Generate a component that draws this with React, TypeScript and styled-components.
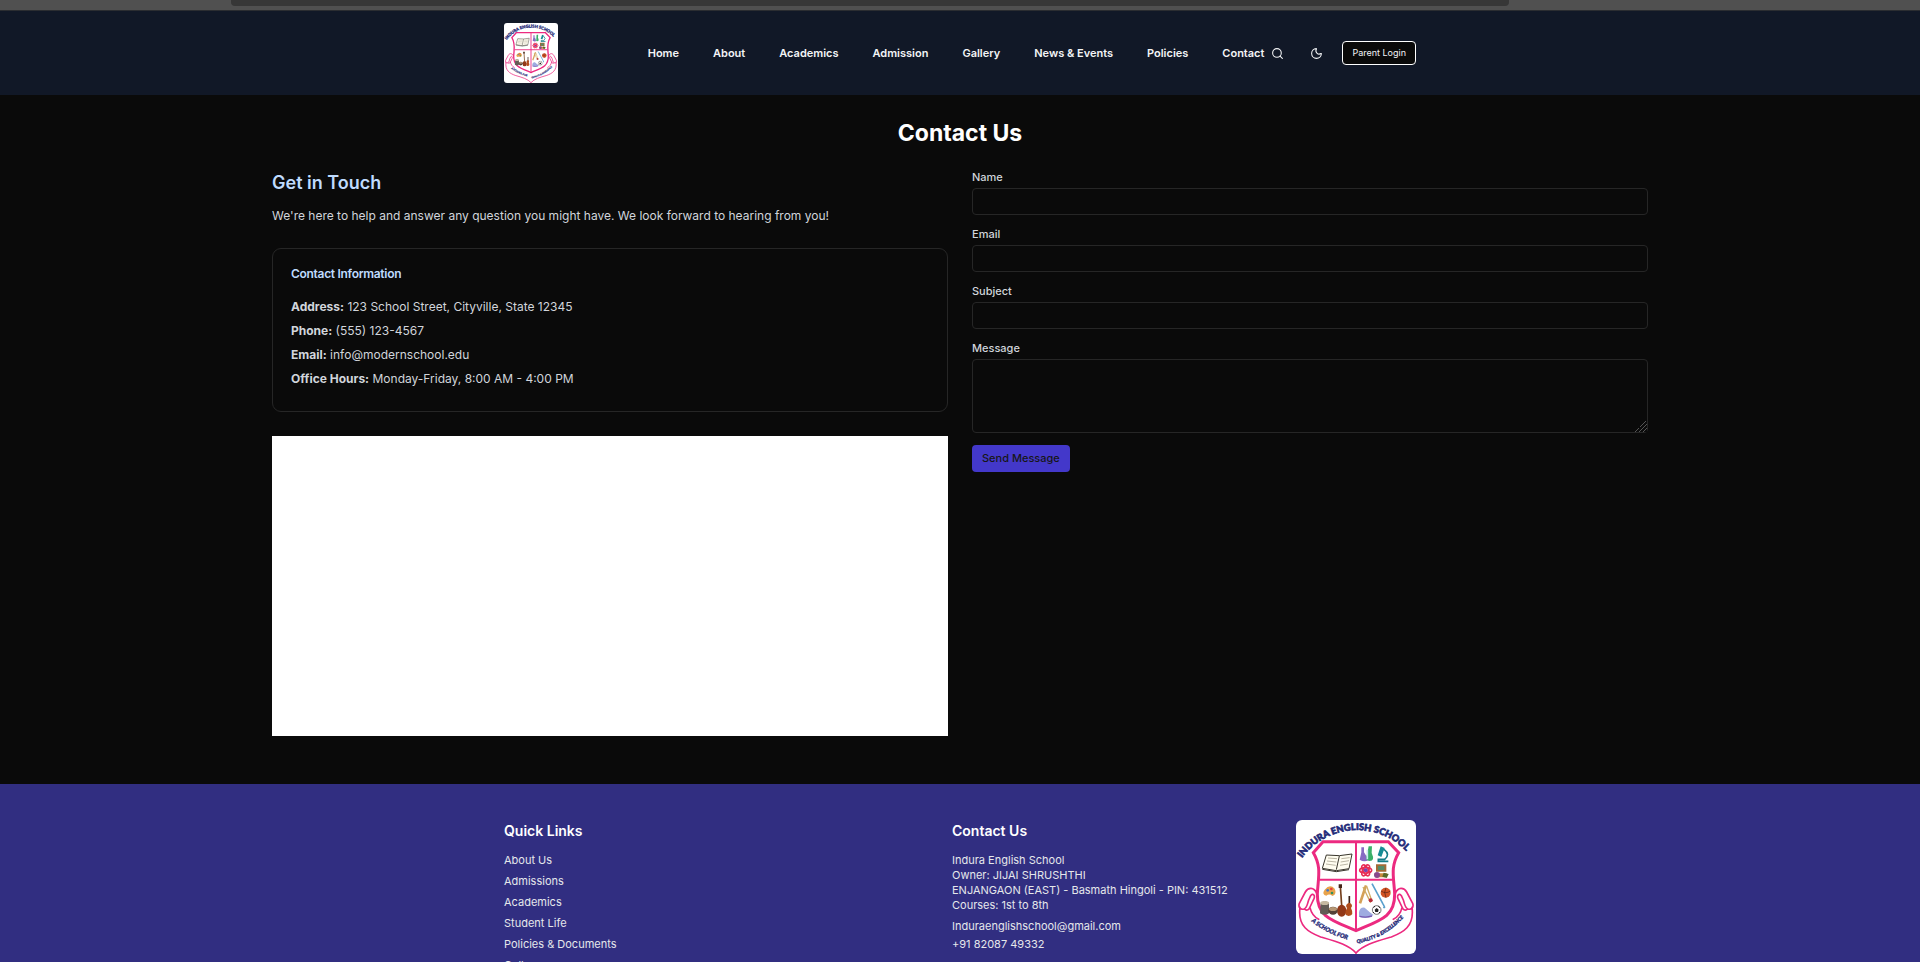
import React from "react";
import styled, { createGlobalStyle } from "styled-components";
import { Moon, Search } from "lucide-react";

const GlobalStyle = createGlobalStyle`
  *, *::before, *::after { box-sizing: border-box; }
  body {
    margin: 0;
    background: #0a0a0a;
    color: #fff;
    font-family: Inter, "Liberation Sans", sans-serif;
    font-size: 12px;
    line-height: 20px;
  }
  h1, h2, h3, p, ul { margin: 0; padding: 0; }
  ul { list-style: none; }
  a { color: inherit; text-decoration: none; }
  button, input, textarea { font-family: inherit; }
`;

const Page = styled.div`
  height: 100vh;
  overflow: hidden;
`;

const TopStrip = styled.div`
  height: 11px;
  padding: 0 411px 0 231px;
  background: #505050;
  border-bottom: 1px solid #2b2d31;
`;

const TopTab = styled.div`
  height: 6px;
  border-radius: 0 0 4px 4px;
  background: #373737;
`;

const Header = styled.header`
  background: #111827;
`;

const Container = styled.div`
  max-width: 936px;
  margin: 0 auto;
  padding: 0 12px;
`;

const HeaderRow = styled(Container)`
  display: flex;
  align-items: center;
  justify-content: space-between;
  padding: 12px;
`;

const CrestSvg = styled.svg<{ $width: number; $height: number; $radius: number }>`
  display: block;
  width: ${(p) => p.$width}px;
  height: ${(p) => p.$height}px;
  border-radius: ${(p) => p.$radius}px;
  background: #fff;
`;

const HeaderRight = styled.div`
  display: flex;
  align-items: center;
`;

const Nav = styled.nav`
  display: flex;
  gap: 34px;
`;

const NavLink = styled.a`
  font-size: 11px;
  line-height: 15px;
  font-weight: 600;
  white-space: nowrap;
  color: #f3f4f6;
`;

const Actions = styled.div`
  display: flex;
  align-items: center;
  gap: 12px;
`;

const IconButton = styled.button`
  display: grid;
  place-items: center;
  width: 27px;
  height: 27px;
  padding: 0;
  border: 0;
  background: transparent;
  color: #f3f4f6;
`;

const LoginButton = styled.button`
  height: 24px;
  padding: 0 9px;
  border: 1px solid #fff;
  border-radius: 4px;
  background: #0a0a0a;
  color: #f3f4f6;
  font-size: 9px;
  line-height: 12px;
  white-space: nowrap;
`;

const Main = styled.main`
  max-width: 1400px;
  margin: 0 auto;
  padding: 24px 12px 48px;
`;

const PageTitle = styled.h1`
  margin-bottom: 22px;
  text-align: center;
  font-size: 23px;
  line-height: 29px;
  font-weight: 700;
`;

const Columns = styled.div`
  display: grid;
  grid-template-columns: 1fr 1fr;
  gap: 24px;
  align-items: start;
`;

const SectionTitle = styled.h2`
  margin-bottom: 10px;
  color: #bfdbfe;
  font-size: 18px;
  line-height: 26px;
  font-weight: 600;
`;

const Intro = styled.p`
  margin-bottom: 22px;
  color: #d1d5db;
`;

const Card = styled.section`
  margin-bottom: 24px;
  padding: 18px;
  border: 1px solid #262626;
  border-radius: 9px;
  color: #d1d5db;
`;

const CardTitle = styled.h3`
  margin-bottom: 16px;
  color: #bfdbfe;
  font-size: 12px;
  line-height: 14px;
  font-weight: 600;
  letter-spacing: -0.025em;
`;

const CardLine = styled.p`
  margin-bottom: 4px;
`;

const MapArea = styled.div`
  height: 300px;
  background: #fff;
`;

const Form = styled.form`
  display: flex;
  flex-direction: column;
  gap: 12px;
`;

const Field = styled.div`
  display: flex;
  flex-direction: column;
  gap: 3px;
`;

const Label = styled.label`
  color: #d1d5db;
  font-size: 11px;
  line-height: 15px;
  font-weight: 500;
`;

const TextInput = styled.input`
  width: 100%;
  height: 27px;
  padding: 6px 9px;
  border: 1px solid #262626;
  border-radius: 4px;
  background: transparent;
  color: #fff;
  font-size: 11px;
`;

const TextArea = styled.textarea`
  width: 100%;
  height: 74px;
  padding: 6px 9px;
  border: 1px solid #262626;
  border-radius: 4px;
  background: transparent;
  color: #fff;
  font-size: 11px;
  resize: vertical;

  &::-webkit-resizer {
    background:
      linear-gradient(135deg, #0a0a0a 60%, transparent 60%),
      repeating-linear-gradient(135deg, #555 0 1px, #0a0a0a 1px 3px);
  }
`;

const SubmitButton = styled.button`
  align-self: flex-start;
  height: 27px;
  padding: 0 10px;
  border: 0;
  border-radius: 4px;
  background: #4338ca;
  color: #171717;
  font-size: 11px;
  line-height: 15px;
  font-weight: 500;
`;

const Footer = styled.footer`
  padding: 36px 0;
  background: #312e81;
`;

const FooterGrid = styled(Container)`
  display: grid;
  grid-template-columns: 1fr 344px 120px;
  align-items: start;
`;

const FooterTitle = styled.h3`
  margin-bottom: 12px;
  font-size: 14px;
  line-height: 21px;
  font-weight: 600;
`;

const FooterLinks = styled.ul`
  display: grid;
  gap: 6px;
`;

const FooterText = styled.div`
  color: #e5e7eb;
  font-size: 11px;
  line-height: 15px;
`;

const ContactLinks = styled.div`
  display: grid;
  gap: 3px;
  margin-top: 6px;
`;

const PINK = "#ec2a80";
const NAVY = "#1f2a78";

function Crest({ id, width, height, radius }: { id: string; width: number; height: number; radius: number }) {
  return (
    <CrestSvg $width={width} $height={height} $radius={radius} viewBox="48 30 360 402" role="img" aria-label="Indura English School">
      <defs>
        <path id={`${id}-top`} d="M66 144 A204 204 0 0 1 406 160" />
        <path id={`${id}-left`} d="M94 334 Q148 378 222 393" />
        <path id={`${id}-right`} d="M231 400 Q320 385 382 310" />
        <path id={`${id}-ribbon`} d="M110 250 C102 230 84 232 76 246 L58 280 C54 293 62 300 72 297 C82 293 82 281 86 270 L92 257 C99 248 106 256 102 266 L90 291 C86 302 78 302 73 297 M60 292 C52 350 88 368 122 381 C170 395 205 404 228 429 M90 293 C94 310 104 322 116 328" />
      </defs>
      <g fill="none" stroke={PINK} strokeWidth="5" strokeLinejoin="round" strokeLinecap="round">
        <use href={`#${id}-ribbon`} />
        <use href={`#${id}-ribbon`} transform="translate(456 0) scale(-1 1)" />
      </g>
      <path d="M129 95 H325 L356 128 C330 172 342 204 344 252 C345 320 303 330 228 362 C153 330 111 320 112 252 C114 204 126 172 100 128 Z" fill="#fff" stroke={PINK} strokeWidth="9" />
      <path d="M228 96 V360 M118 209 H338" fill="none" stroke={PINK} strokeWidth="6" />

      <path d="M139 135 L178 137 L216 132 L207 176 L169 182 L127 175 Z" fill="#fffdf0" stroke="#39362d" strokeWidth="3" />
      <path d="M178 138 L169 179 M127 178 L169 185 L207 179" stroke="#39362d" strokeWidth="3" fill="none" />
      <path d="M144 144 l27 2 M141 153 l28 3 M138 162 l29 4 M184 146 l25 -3 M182 156 l25 -4 M180 166 l24 -4" stroke="#99937f" strokeWidth="2" />

      <path d="M244 112 h8 v15 l14 22 q-12 9-27 0 l5-22 Z" fill="#876ac3" />
      <path d="M266 109 h10 l-1 20 q11 24-6 24 q-16 0-7-24 Z" fill="#3aaf68" />
      <path d="M262 119 v29" stroke="#cbe7f2" strokeWidth="5" />
      <path d="M302 109 l12 5 -10 27 -11 -5 Z" fill="#178c94" />
      <path d="M312 118 q20 15 2 30 h-19 v6 h30" fill="none" stroke="#157d88" strokeWidth="5" />
      <g fill="none" stroke="#e82c55" strokeWidth="5">
        <ellipse cx="257" cy="181" rx="18" ry="8" />
        <ellipse cx="257" cy="181" rx="18" ry="8" transform="rotate(60 257 181)" />
        <ellipse cx="257" cy="181" rx="18" ry="8" transform="rotate(120 257 181)" />
      </g>
      <circle cx="257" cy="181" r="6" fill="#7942ae" />
      <path d="M288 163 h31 v22 h-31 Z" fill="#a36a36" />
      <path d="M294 168 h19 v12 h-19 Z" fill="#568a68" />
      <path d="M283 190 h38 l-5 12 h-29 Z" fill="#c8883c" />
      <circle cx="291" cy="195" r="9" fill="#88488c" />
      <path d="M311 188 l15 4 -6 12 -13-4 Z" fill="#596829" />

      <path d="M134 239 q16-19 30-3 q8 16-7 22 q-9-8-18-1 q-15-4-5-18Z" fill="#e8a34b" />
      <circle cx="143" cy="241" r="4" fill="#4378c8" />
      <circle cx="154" cy="237" r="4" fill="#e43b3b" />
      <circle cx="156" cy="249" r="4" fill="#32915c" />
      <path d="M181 228 L185 286" stroke="#75401e" strokeWidth="5" />
      <path d="M176 223 h10 v11 h-10Z" fill="#442417" />
      <ellipse cx="185" cy="302" rx="14" ry="18" fill="#923918" />
      <path d="M208 258 V296" stroke="#39221a" strokeWidth="5" />
      <path d="M208 278 q13 5 5 16 q11 22-7 24 q-17-3-5-24 q-8-11 7-16Z" fill="#b14e1c" />
      <path d="M122 278 q12-9 25 0 v32 q-13 9-27 0Z" fill="#625c56" />
      <ellipse cx="134" cy="279" rx="13" ry="6" fill="#c5b9a1" />
      <ellipse cx="159" cy="302" rx="14" ry="12" fill="#524137" />
      <ellipse cx="159" cy="297" rx="12" ry="6" fill="#b59775" />

      <path d="M258 226 L240 280" stroke="#d4a158" strokeWidth="8" />
      <path d="M249 231 L272 278 M260 229 L276 274" stroke="#d0ad65" strokeWidth="4" />
      <circle cx="272" cy="271" r="6" fill="#b92d3b" />
      <path d="M276 221 L308 280 Q318 297 310 291" stroke="#5aa0cd" strokeWidth="5" fill="none" />
      <circle cx="317" cy="248" r="15" fill="#d25424" />
      <path d="M303 243 q15 10 28 0 M318 233 q-8 14 0 30" stroke="#552115" strokeWidth="2" fill="none" />
      <path d="M237 307 q2-16 17-14 q14 13 27 22 q-20 15-44 5Z" fill="#9eabe0" />
      <path d="M239 319 q20 5 37-1" stroke="#785bb2" strokeWidth="4" fill="none" />
      <circle cx="290" cy="300" r="13" fill="#fff" stroke="#333" strokeWidth="2" />
      <path d="M290 294 l6 5 -2 7 h-8 l-2-7Z" fill="#222" />
      <path d="M280 292 l5-3 M295 289 l5 4 M279 306 l4 4 M300 306 l-4 4" stroke="#222" strokeWidth="3" />

      <g fill={NAVY} stroke={NAVY} fontWeight="900" fontFamily='Lato, "Liberation Sans", sans-serif'>
        <text fontSize="28" strokeWidth="2"><textPath href={`#${id}-top`}>INDURA ENGLISH SCHOOL</textPath></text>
        <g fontStyle="italic" strokeWidth="1">
          <text fontSize="18"><textPath href={`#${id}-left`}>A SCHOOL FOR</textPath></text>
          <text fontSize="15"><textPath href={`#${id}-right`}>QUALITY &amp; EXCELLENCE</textPath></text>
        </g>
      </g>
    </CrestSvg>
  );
}

const navItems = ["Home", "About", "Academics", "Admission", "Gallery", "News & Events", "Policies", "Contact"];
const quickLinks = ["About Us", "Admissions", "Academics", "Student Life", "Policies & Documents", "Gallery"];
const contactDetails = [
  ["Address:", "123 School Street, Cityville, State 12345"],
  ["Phone:", "(555) 123-4567"],
  ["Email:", "info@modernschool.edu"],
  ["Office Hours:", "Monday-Friday, 8:00 AM - 4:00 PM"],
];
const fields = [
  { id: "name", label: "Name", type: "text" },
  { id: "email", label: "Email", type: "email" },
  { id: "subject", label: "Subject", type: "text" },
];

export default function App() {
  return (
    <Page>
      <GlobalStyle />
      <TopStrip><TopTab /></TopStrip>
      <Header>
        <HeaderRow>
          <a href="#home"><Crest id="header-crest" width={54} height={60} radius={3} /></a>
          <HeaderRight>
            <Nav>
              {navItems.map((item) => <NavLink key={item} href="#">{item}</NavLink>)}
            </Nav>
            <Actions>
              <IconButton type="button" aria-label="Search"><Search size={13} strokeWidth={2} /></IconButton>
              <IconButton type="button" aria-label="Toggle theme"><Moon size={13} strokeWidth={2} /></IconButton>
              <LoginButton type="button">Parent Login</LoginButton>
            </Actions>
          </HeaderRight>
        </HeaderRow>
      </Header>
      <Main>
        <PageTitle>Contact Us</PageTitle>
        <Columns>
          <div>
            <SectionTitle>Get in Touch</SectionTitle>
            <Intro>We're here to help and answer any question you might have. We look forward to hearing from you!</Intro>
            <Card>
              <CardTitle>Contact Information</CardTitle>
              {contactDetails.map(([term, value]) => (
                <CardLine key={term}><strong>{term}</strong> {value}</CardLine>
              ))}
            </Card>
            <MapArea />
          </div>
          <Form>
            {fields.map((f) => (
              <Field key={f.id}>
                <Label htmlFor={f.id}>{f.label}</Label>
                <TextInput id={f.id} type={f.type} />
              </Field>
            ))}
            <Field>
              <Label htmlFor="message">Message</Label>
              <TextArea id="message" />
            </Field>
            <SubmitButton type="submit">Send Message</SubmitButton>
          </Form>
        </Columns>
      </Main>
      <Footer>
        <FooterGrid>
          <div>
            <FooterTitle>Quick Links</FooterTitle>
            <FooterText>
              <FooterLinks>
                {quickLinks.map((l) => <li key={l}><a href="#">{l}</a></li>)}
              </FooterLinks>
            </FooterText>
          </div>
          <div>
            <FooterTitle>Contact Us</FooterTitle>
            <FooterText>
              <p>Indura English School</p>
              <p>Owner: JIJAI SHRUSHTHI</p>
              <p>ENJANGAON (EAST) - Basmath Hingoli - PIN: 431512</p>
              <p>Courses: 1st to 8th</p>
              <ContactLinks>
                <a href="mailto:Induraenglishschool@gmail.com">Induraenglishschool@gmail.com</a>
                <a href="tel:+918208749332">+91 82087 49332</a>
              </ContactLinks>
            </FooterText>
          </div>
          <Crest id="footer-crest" width={120} height={134} radius={6} />
        </FooterGrid>
      </Footer>
    </Page>
  );
}
